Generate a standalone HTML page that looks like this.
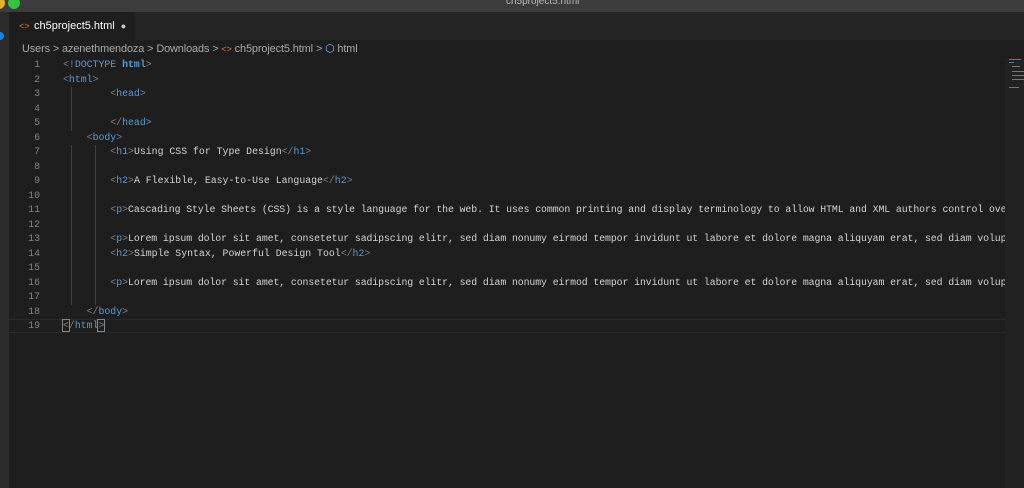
<!DOCTYPE html>
<html><head><style>
*{margin:0;padding:0;box-sizing:border-box}
body{width:1024px;height:488px;background:#1e1e1e;overflow:hidden;position:relative;font-family:"Liberation Sans",sans-serif}
#title{position:absolute;left:0;top:0;width:1024px;height:12px;background:#3c3c3c}
#title span{position:absolute;left:506px;top:-4px;font-size:10px;color:#bbb}
.dot{position:absolute;top:-3px;width:12px;height:12px;border-radius:50%}
#act{position:absolute;left:0;top:12px;width:9px;height:476px;background:#2c2c2c}
#tabs{position:absolute;left:9px;top:12px;width:1015px;height:28px;background:#252526}
#tab{position:absolute;left:0;top:0;width:126px;height:28px;background:#1e1e1e;color:#fff;font-size:11px;line-height:28px;padding-left:25px}
#crumb{position:absolute;left:22px;top:42px;font-size:10.9px;letter-spacing:-0.1px;color:#a9a9a9;white-space:nowrap}
.o{color:#e37933}
#code{position:absolute;left:9px;top:58px;width:996px;height:430px;overflow:hidden;font-family:"Liberation Mono",monospace;font-size:9.85px;color:#d4d4d4}
.l{position:absolute;left:0;height:14.5px;line-height:14.5px;white-space:pre;width:1000px}
.c{letter-spacing:-0.09px}
.n{display:inline-block;width:31px;text-align:right;color:#858585;margin-right:23px}
.t{color:#808080}.k{color:#569cd6}
.g{position:absolute;width:1px;background:#404040}
#mini{position:absolute;left:1005px;top:58px;width:19px;height:430px;background:#222}
</style></head><body>
<div id="title"><span>ch5project5.html</span></div>
<div class="dot" style="left:-7px;background:#e6b12a"></div>
<div class="dot" style="left:8px;background:#35c23f"></div>
<div id="act"><div style="position:absolute;left:-4px;top:20px;width:8px;height:8px;border-radius:50%;background:#1a85e0"></div></div>
<div id="tabs"><div id="tab"><span class="o" style="position:absolute;left:10px;font-size:9px">&lt;&gt;</span>ch5project5.html <span style="color:#ccc;font-size:9px;margin-left:3px">●</span></div></div>
<div id="crumb">Users &gt; azenethmendoza &gt; Downloads &gt; <span class="o" style="font-size:9px">&lt;&gt;</span> ch5project5.html &gt; <span style="color:#75beff">⬡</span> html</div>
<div id="code">
<div class="g" style="left:62px;top:29px;height:44px"></div>
<div class="g" style="left:62px;top:87px;height:160px"></div>
<div class="g" style="left:86px;top:87px;height:160px"></div>
<div style="position:absolute;left:0;top:261px;width:996px;height:14px;border-top:1px solid #2a2a2a;border-bottom:1px solid #2a2a2a"></div>
<div class="l" style="top:0"><span class="n">1</span><span class="t">&lt;!</span><span class="k">DOCTYPE</span> <span class="k" style="font-weight:bold">html</span><span class="t">&gt;</span></div>
<div class="l" style="top:14.5px"><span class="n">2</span><span class="t">&lt;</span><span class="k">html</span><span class="t">&gt;</span></div>
<div class="l" style="top:29px"><span class="n">3</span>        <span class="t">&lt;</span><span class="k">head</span><span class="t">&gt;</span></div>
<div class="l" style="top:43.5px"><span class="n">4</span></div>
<div class="l" style="top:58px"><span class="n">5</span>        <span class="t">&lt;/</span><span class="k">head</span><span class="t">&gt;</span></div>
<div class="l" style="top:72.5px"><span class="n">6</span>    <span class="t">&lt;</span><span class="k">body</span><span class="t">&gt;</span></div>
<div class="l" style="top:87px"><span class="n">7</span>        <span class="t">&lt;</span><span class="k">h1</span><span class="t">&gt;</span>Using CSS for Type Design<span class="t">&lt;/</span><span class="k">h1</span><span class="t">&gt;</span></div>
<div class="l" style="top:101.5px"><span class="n">8</span></div>
<div class="l" style="top:116px"><span class="n">9</span>        <span class="t">&lt;</span><span class="k">h2</span><span class="t">&gt;</span>A Flexible, Easy-to-Use Language<span class="t">&lt;/</span><span class="k">h2</span><span class="t">&gt;</span></div>
<div class="l" style="top:130.5px"><span class="n">10</span></div>
<div class="l" style="top:145px"><span class="n">11</span>        <span class="t">&lt;</span><span class="k">p</span><span class="t">&gt;</span><span class="c">Cascading Style Sheets (CSS) is a style language for the web. It uses common printing and display terminology to allow HTML and XML authors control over</span></div>
<div class="l" style="top:159.5px"><span class="n">12</span></div>
<div class="l" style="top:174px"><span class="n">13</span>        <span class="t">&lt;</span><span class="k">p</span><span class="t">&gt;</span><span class="c">Lorem ipsum dolor sit amet, consetetur sadipscing elitr, sed diam nonumy eirmod tempor invidunt ut labore et dolore magna aliquyam erat, sed diam voluptua</span></div>
<div class="l" style="top:188.5px"><span class="n">14</span>        <span class="t">&lt;</span><span class="k">h2</span><span class="t">&gt;</span>Simple Syntax, Powerful Design Tool<span class="t">&lt;/</span><span class="k">h2</span><span class="t">&gt;</span></div>
<div class="l" style="top:203px"><span class="n">15</span></div>
<div class="l" style="top:217.5px"><span class="n">16</span>        <span class="t">&lt;</span><span class="k">p</span><span class="t">&gt;</span><span class="c">Lorem ipsum dolor sit amet, consetetur sadipscing elitr, sed diam nonumy eirmod tempor invidunt ut labore et dolore magna aliquyam erat, sed diam voluptua</span></div>
<div class="l" style="top:232px"><span class="n">17</span></div>
<div class="l" style="top:246.5px"><span class="n">18</span>    <span class="t">&lt;/</span><span class="k">body</span><span class="t">&gt;</span></div>
<div class="l" style="top:261px"><span class="n">19</span><span class="t" style="outline:1px solid #888">&lt;</span><span class="t">/</span><span class="k">html</span><span class="t" style="outline:1px solid #888">&gt;</span></div>
</div>
<div id="mini">
<div style="position:absolute;left:4px;top:1px;width:12px;height:1px;background:#4a7fb0"></div>
<div style="position:absolute;left:4px;top:4px;width:5px;height:1px;background:#4a7fb0"></div>
<div style="position:absolute;left:7px;top:8px;width:8px;height:1px;background:#777"></div>
<div style="position:absolute;left:7px;top:13px;width:12px;height:1px;background:#777"></div>
<div style="position:absolute;left:7px;top:17px;width:12px;height:1px;background:#777"></div>
<div style="position:absolute;left:7px;top:21px;width:12px;height:1px;background:#777"></div>
<div style="position:absolute;left:4px;top:29px;width:10px;height:1px;background:#4a7fb0"></div>
</div>
</body></html>
